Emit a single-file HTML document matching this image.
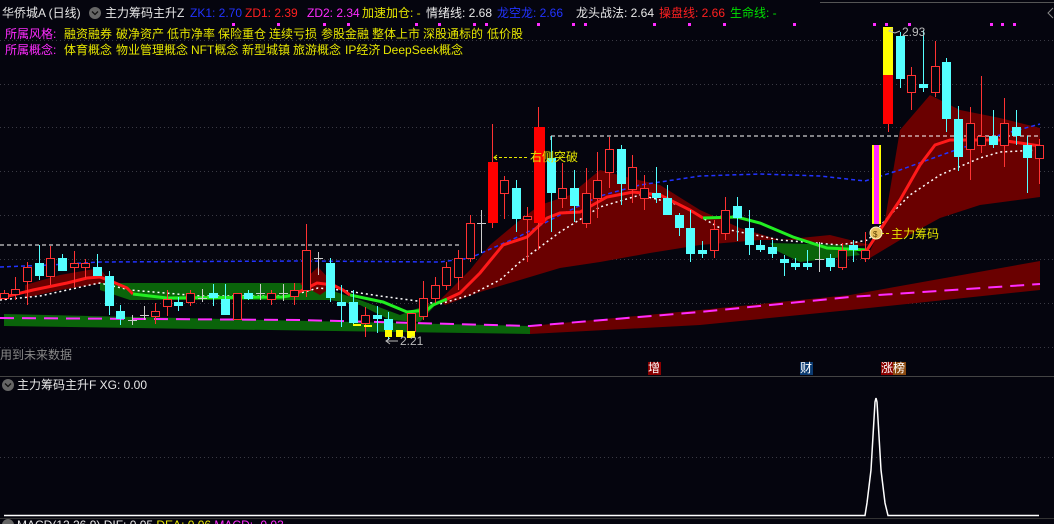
<!DOCTYPE html>
<html><head><meta charset="utf-8"><style>
html,body{margin:0;padding:0;background:#05050e;width:1054px;height:524px;overflow:hidden;position:relative;font-family:"Liberation Sans","Noto Sans CJK SC",sans-serif;font-size:12px}
.t{position:absolute;white-space:nowrap;line-height:14px}
.y{color:#e6e600}.m{color:#ff2cff}.w{color:#e8e8e8}.b{color:#2233ff}.r{color:#ff2020}.g{color:#00e000}
svg{position:absolute;left:0;top:0}
</style></head><body>
<svg width="1054" height="524" viewBox="0 0 1054 524">
<g stroke="#3a3a44" stroke-dasharray="1,3" stroke-width="1">
<line x1="0" y1="40.5" x2="1054" y2="40.5"/><line x1="0" y1="84.5" x2="1054" y2="84.5"/><line x1="0" y1="127.5" x2="1054" y2="127.5"/><line x1="0" y1="171.5" x2="1054" y2="171.5"/><line x1="0" y1="215.5" x2="1054" y2="215.5"/><line x1="0" y1="259.5" x2="1054" y2="259.5"/><line x1="0" y1="303.5" x2="1054" y2="303.5"/><line x1="0" y1="347.5" x2="1054" y2="347.5"/><line x1="0" y1="457.5" x2="1054" y2="457.5"/>
</g>
<line x1="820" y1="2.5" x2="1054" y2="2.5" stroke="#555" />
<!-- bottom band -->
<polygon points="4,314 530,326 530,334 4,326" fill="#0a640a"/>
<polygon points="530,326 700,310 850,295 1040,261 1040,290 850,310 700,325 530,334" fill="#6a0000"/>
<!-- main cloud -->
<polygon points="25,285 60,275 100,268 110,282 60,290 25,298" fill="#6a0000"/>
<polygon points="100,283 300,283 330,290 360,300 400,315 440,300 420,322 390,320 360,305 330,300 290,300 130,300 100,290" fill="#0a640a"/>
<polygon points="300,284 318,267 335,285 320,295" fill="#6a0000"/>
<polygon points="440,300 470,270 490,245 520,220 540,205 570,195 600,170 630,178 660,185 700,210 740,228 780,240 830,235 870,245 850,247 800,240 760,240 700,245 650,253 600,262 560,268 520,280 480,292 445,305" fill="#6a0000"/>
<polygon points="770,243 850,245 860,255 800,262 775,250" fill="#0a640a"/>
<polygon points="868,255 885,220 900,130 930,95 960,110 1000,118 1040,128 1040,197 980,205 940,218 900,240 870,258" fill="#6a0000"/>
<!-- magenta/red lower dashed -->
<polyline points="0,318 300,320 530,326 700,312 850,297 1040,284" fill="none" stroke="#ff2cff" stroke-width="2" stroke-dasharray="14,8"/>
<!-- white dashed horiz -->
<line x1="0" y1="245" x2="460" y2="245" stroke="#fff" stroke-dasharray="4,3"/>
<line x1="551" y1="136" x2="1040" y2="136" stroke="#fff" stroke-dasharray="4,3"/>
<line x1="551" y1="136" x2="551" y2="140" stroke="#fff"/>
<!-- blue dashed -->
<polyline points="0,267 50,265 100,262 300,261 440,262 470,258 520,236 560,215 600,196 640,185 700,176 760,174 820,176 865,181 900,170 950,152 1000,135 1040,124" fill="none" stroke="#2233ff" stroke-dasharray="4,3" stroke-width="1.5"/>
<!-- white dotted MA -->
<polyline points="0,300 40,296 90,285 100,283 130,290 200,296 290,296 318,288 340,290 380,296 440,304 470,295 500,280 520,262 560,232 600,207 640,195 680,205 720,228 780,240 840,245 868,240 890,215 910,195 940,175 980,158 1000,152 1040,150" fill="none" stroke="#fff" stroke-dasharray="2,3" stroke-width="1.5"/>
<!-- red/green MA -->
<polyline points="0,298 33,290 67,283 87,278 100,277 113,282 127,288 133,294" fill="none" stroke="#ff1a1a" stroke-width="3"/>
<polyline points="133,294 167,298 283,297 293,295" fill="none" stroke="#22ee22" stroke-width="3"/>
<polyline points="293,295 317,283 333,285 343,290 350,295" fill="none" stroke="#ff1a1a" stroke-width="3"/>
<polyline points="350,295 383,302 407,312 427,310 433,305 447,299" fill="none" stroke="#22ee22" stroke-width="3"/>
<polyline points="447,299 460,293 480,273 503,245 527,237 547,218 560,213 580,212 607,197 633,192 660,195 690,210 703,218" fill="none" stroke="#ff1a1a" stroke-width="3"/>
<polyline points="703,218 737,217 760,223 793,237 827,248 867,250" fill="none" stroke="#22ee22" stroke-width="3"/>
<polyline points="867,250 880,230 900,200 920,165 935,145 950,140 1000,140 1040,146" fill="none" stroke="#ff1a1a" stroke-width="3"/>
<!-- magenta top squares -->
<g fill="#ff2cff">
<rect x="232" y="23" width="3" height="3"/><rect x="277" y="23" width="3" height="3"/><rect x="323" y="23" width="3" height="3"/><rect x="347" y="23" width="3" height="3"/><rect x="415" y="23" width="3" height="3"/><rect x="438" y="23" width="3" height="3"/><rect x="473" y="23" width="3" height="3"/><rect x="485" y="23" width="3" height="3"/>
<rect x="537" y="23" width="3" height="3"/><rect x="572" y="23" width="3" height="3"/><rect x="584" y="23" width="3" height="3"/><rect x="653" y="23" width="3" height="3"/><rect x="688" y="23" width="3" height="3"/><rect x="723" y="23" width="3" height="3"/><rect x="793" y="23" width="3" height="3"/><rect x="873" y="23" width="3" height="3"/><rect x="885" y="23" width="3" height="3"/><rect x="908" y="23" width="3" height="3"/><rect x="990" y="23" width="3" height="3"/><rect x="1001" y="23" width="3" height="3"/><rect x="1013" y="23" width="3" height="3"/>
</g>
<!-- candles: wicks -->
<g stroke-width="1">
<g stroke="#ff3232">
<line x1="4.5" y1="290" x2="4.5" y2="300"/><line x1="15.5" y1="277" x2="15.5" y2="300"/><line x1="27.5" y1="262" x2="27.5" y2="305"/><line x1="50.5" y1="246" x2="50.5" y2="285"/><line x1="74.5" y1="251" x2="74.5" y2="287"/><line x1="85.5" y1="259" x2="85.5" y2="278"/><line x1="155.5" y1="303" x2="155.5" y2="324"/><line x1="167.5" y1="290" x2="167.5" y2="316"/><line x1="190.5" y1="290" x2="190.5" y2="306"/><line x1="271.5" y1="290" x2="271.5" y2="305"/><line x1="294.5" y1="283" x2="294.5" y2="305"/><line x1="306.5" y1="224" x2="306.5" y2="297"/><line x1="365.5" y1="307" x2="365.5" y2="337"/><line x1="411.5" y1="315" x2="411.5" y2="337"/><line x1="423.5" y1="281" x2="423.5" y2="320"/><line x1="435.5" y1="277" x2="435.5" y2="303"/><line x1="446.5" y1="262" x2="446.5" y2="290"/><line x1="458.5" y1="250" x2="458.5" y2="290"/><line x1="470.5" y1="215" x2="470.5" y2="262"/><line x1="492.5" y1="124" x2="492.5" y2="228"/><line x1="504.5" y1="176" x2="504.5" y2="219"/><line x1="527.5" y1="207" x2="527.5" y2="262"/><line x1="538.5" y1="107" x2="538.5" y2="250"/><line x1="562.5" y1="163" x2="562.5" y2="208"/><line x1="586.5" y1="168" x2="586.5" y2="228"/><line x1="597.5" y1="152" x2="597.5" y2="218"/><line x1="609.5" y1="137" x2="609.5" y2="188"/><line x1="632.5" y1="155" x2="632.5" y2="203"/><line x1="644.5" y1="175" x2="644.5" y2="210"/><line x1="714.5" y1="220" x2="714.5" y2="258"/><line x1="725.5" y1="197" x2="725.5" y2="240"/><line x1="842.5" y1="243" x2="842.5" y2="270"/><line x1="865.5" y1="232" x2="865.5" y2="262"/><line x1="888.5" y1="120" x2="888.5" y2="132"/><line x1="911.5" y1="67" x2="911.5" y2="110"/><line x1="935.5" y1="41" x2="935.5" y2="97"/><line x1="970.5" y1="107" x2="970.5" y2="180"/><line x1="981.5" y1="76" x2="981.5" y2="153"/><line x1="1004.5" y1="98" x2="1004.5" y2="167"/><line x1="1039.5" y1="139" x2="1039.5" y2="184"/>
</g>
<g stroke="#54ffff">
<line x1="39.5" y1="245" x2="39.5" y2="280"/><line x1="62.5" y1="254" x2="62.5" y2="271"/><line x1="97.5" y1="254" x2="97.5" y2="276"/><line x1="109.5" y1="271" x2="109.5" y2="315"/><line x1="120.5" y1="305" x2="120.5" y2="325"/><line x1="178.5" y1="297" x2="178.5" y2="311"/><line x1="213.5" y1="284" x2="213.5" y2="306"/><line x1="225.5" y1="284" x2="225.5" y2="315"/><line x1="248.5" y1="290" x2="248.5" y2="300"/><line x1="330.5" y1="258" x2="330.5" y2="302"/><line x1="341.5" y1="285" x2="341.5" y2="327"/><line x1="353.5" y1="290" x2="353.5" y2="325"/><line x1="377.5" y1="306" x2="377.5" y2="333"/><line x1="388.5" y1="312" x2="388.5" y2="340"/><line x1="516.5" y1="180" x2="516.5" y2="232"/><line x1="551.5" y1="136" x2="551.5" y2="232"/><line x1="574.5" y1="170" x2="574.5" y2="222"/><line x1="621.5" y1="145" x2="621.5" y2="205"/><line x1="656.5" y1="167" x2="656.5" y2="203"/><line x1="667.5" y1="185" x2="667.5" y2="215"/><line x1="679.5" y1="213" x2="679.5" y2="236"/><line x1="690.5" y1="210" x2="690.5" y2="262"/><line x1="702.5" y1="241" x2="702.5" y2="258"/><line x1="737.5" y1="197" x2="737.5" y2="241"/><line x1="749.5" y1="210" x2="749.5" y2="255"/><line x1="760.5" y1="240" x2="760.5" y2="252"/><line x1="772.5" y1="240" x2="772.5" y2="258"/><line x1="784.5" y1="255" x2="784.5" y2="276"/><line x1="795.5" y1="258" x2="795.5" y2="270"/><line x1="807.5" y1="250" x2="807.5" y2="270"/><line x1="830.5" y1="254" x2="830.5" y2="271"/><line x1="853.5" y1="240" x2="853.5" y2="262"/><line x1="900.5" y1="32" x2="900.5" y2="88"/><line x1="923.5" y1="30" x2="923.5" y2="92"/><line x1="946.5" y1="58" x2="946.5" y2="132"/><line x1="958.5" y1="106" x2="958.5" y2="171"/><line x1="993.5" y1="110" x2="993.5" y2="148"/><line x1="1016.5" y1="110" x2="1016.5" y2="145"/><line x1="1027.5" y1="136" x2="1027.5" y2="193"/>
</g>
<g stroke="#cccccc">
<line x1="132.5" y1="315" x2="132.5" y2="325"/><line x1="128" y1="320.5" x2="137" y2="320.5"/>
<line x1="144.5" y1="306" x2="144.5" y2="320"/><line x1="140" y1="315.5" x2="149" y2="315.5"/>
<line x1="202.5" y1="289" x2="202.5" y2="302"/><line x1="198" y1="298.5" x2="207" y2="298.5"/>
<line x1="260.5" y1="284" x2="260.5" y2="300"/><line x1="256" y1="293.5" x2="265" y2="293.5"/>
<line x1="283.5" y1="284" x2="283.5" y2="301"/><line x1="279" y1="293.5" x2="288" y2="293.5"/>
<line x1="318.5" y1="252" x2="318.5" y2="275"/><line x1="314" y1="258.5" x2="323" y2="258.5"/>
<line x1="481.5" y1="210" x2="481.5" y2="253"/><line x1="477" y1="223.5" x2="486" y2="223.5"/>
<line x1="819.5" y1="242" x2="819.5" y2="272"/><line x1="815" y1="259.5" x2="824" y2="259.5"/>
</g>
</g>
<!-- red hollow bodies -->
<g fill="#05050e" stroke="#ff3232">
<rect x="0.5" y="293.5" width="8" height="5"/><rect x="11.5" y="289.5" width="8" height="5"/><rect x="23.5" y="267.5" width="8" height="14"/><rect x="46.5" y="258.5" width="8" height="18"/><rect x="70.5" y="263.5" width="8" height="4"/><rect x="81.5" y="263.5" width="8" height="4"/><rect x="151.5" y="311.5" width="8" height="5"/><rect x="163.5" y="299.5" width="8" height="7"/><rect x="186.5" y="293.5" width="8" height="9"/><rect x="233.5" y="293.5" width="8" height="26"/><rect x="267.5" y="293.5" width="8" height="6"/><rect x="290.5" y="290.5" width="8" height="6"/><rect x="302.5" y="250.5" width="8" height="40"/><rect x="361.5" y="315.5" width="8" height="8"/><rect x="407.5" y="313.5" width="8" height="18"/><rect x="419.5" y="298.5" width="8" height="18"/><rect x="431.5" y="285.5" width="8" height="13"/><rect x="442.5" y="267.5" width="8" height="18"/><rect x="454.5" y="258.5" width="8" height="19"/><rect x="466.5" y="223.5" width="8" height="35"/><rect x="500.5" y="180.5" width="8" height="13"/><rect x="523.5" y="216.5" width="8" height="3"/><rect x="558.5" y="188.5" width="8" height="10"/><rect x="582.5" y="193.5" width="8" height="30"/><rect x="593.5" y="180.5" width="8" height="18"/><rect x="605.5" y="149.5" width="8" height="23"/><rect x="628.5" y="167.5" width="8" height="22"/><rect x="640.5" y="188.5" width="8" height="10"/><rect x="710.5" y="229.5" width="8" height="21"/><rect x="721.5" y="210.5" width="8" height="23"/><rect x="838.5" y="250.5" width="8" height="17"/><rect x="861.5" y="250.5" width="8" height="8"/><rect x="907.5" y="75.5" width="8" height="17"/><rect x="931.5" y="66.5" width="8" height="26"/><rect x="966.5" y="123.5" width="8" height="26"/><rect x="977.5" y="136.5" width="8" height="9"/><rect x="1000.5" y="123.5" width="8" height="22"/><rect x="1035.5" y="145.5" width="8" height="13"/>
</g>
<g fill="#ff0000"><rect x="488" y="162" width="10" height="61"/><rect x="534" y="127" width="11" height="96"/><rect x="883" y="75" width="10" height="49"/></g>
<rect x="883" y="27" width="10" height="48" fill="#ffff00"/>
<rect x="872" y="145" width="9" height="79" fill="#ffff00"/><rect x="874" y="145" width="5" height="79" fill="#ff2cff"/>
<g fill="#ffff00"><rect x="385" y="330" width="7" height="7"/><rect x="396" y="330" width="7" height="7"/><rect x="407" y="331" width="8" height="7"/></g>
<g fill="#ffff00"><rect x="353" y="324" width="8" height="2"/><rect x="364" y="325" width="8" height="2"/></g>
<!-- cyan bodies -->
<g fill="#54ffff">
<rect x="35" y="263" width="9" height="13"/><rect x="58" y="258" width="9" height="13"/><rect x="93" y="267" width="9" height="9"/><rect x="105" y="276" width="9" height="30"/><rect x="116" y="311" width="9" height="8"/><rect x="174" y="302" width="9" height="4"/><rect x="209" y="293" width="9" height="5"/><rect x="221" y="299" width="9" height="16"/><rect x="244" y="293" width="9" height="6"/><rect x="326" y="263" width="9" height="35"/><rect x="337" y="302" width="9" height="4"/><rect x="349" y="302" width="9" height="21"/><rect x="373" y="315" width="9" height="4"/><rect x="384" y="319" width="9" height="11"/><rect x="512" y="188" width="9" height="31"/><rect x="547" y="158" width="9" height="35"/><rect x="570" y="188" width="9" height="18"/><rect x="617" y="149" width="9" height="35"/><rect x="652" y="193" width="9" height="5"/><rect x="663" y="198" width="9" height="17"/><rect x="675" y="215" width="9" height="13"/><rect x="686" y="228" width="9" height="26"/><rect x="698" y="250" width="9" height="4"/><rect x="733" y="206" width="9" height="12"/><rect x="745" y="228" width="9" height="17"/><rect x="756" y="245" width="9" height="5"/><rect x="768" y="247" width="9" height="7"/><rect x="780" y="259" width="9" height="4"/><rect x="791" y="263" width="9" height="4"/><rect x="803" y="263" width="9" height="4"/><rect x="826" y="258" width="9" height="9"/><rect x="849" y="245" width="9" height="5"/><rect x="896" y="36" width="9" height="43"/><rect x="919" y="84" width="9" height="4"/><rect x="942" y="62" width="9" height="57"/><rect x="954" y="119" width="9" height="38"/><rect x="989" y="136" width="9" height="9"/><rect x="1012" y="127" width="9" height="9"/><rect x="1023" y="145" width="9" height="13"/>
</g>
<!-- annotations -->
<line x1="494" y1="157.5" x2="528" y2="157.5" stroke="#e6e600" stroke-dasharray="3,2"/>
<path d="M497 155 L494 157.5 L497 160" stroke="#e6e600" fill="none"/>
<line x1="881" y1="233.5" x2="890" y2="233.5" stroke="#e6e600" stroke-dasharray="3,2"/>
<circle cx="876" cy="233" r="6" fill="#e8c060" stroke="#fff8c0"/>
<text x="873" y="237" font-size="8" fill="#604000" font-family="Liberation Sans">$</text>
<path d="M893 28 L889 31 L895 33 L900 31" stroke="#bbb" fill="none"/>
<path d="M390 338 L386 341 L390 344 M386 341 L398 341" stroke="#bbb" fill="none"/>
<path d="M1053 8 L1048 13 L1053 18" stroke="#888" fill="none"/>
<!-- separators & lower panel -->
<line x1="0" y1="376.5" x2="1054" y2="376.5" stroke="#444"/>
<polyline points="4,515.5 865,515.5 867,503 871,470 875,402 876,398 877,402 881,470 885,503 888,515.5 1039,515.5" fill="none" stroke="#fff" stroke-width="1.5"/>
<line x1="0" y1="518.5" x2="1054" y2="518.5" stroke="#333"/>
<circle cx="95" cy="13" r="6" fill="#666"/><path d="M92 11.5 L95 14.5 L98 11.5" stroke="#111" fill="none" stroke-width="1.3"/>
<circle cx="8" cy="385" r="6" fill="#666"/><path d="M5 383.5 L8 386.5 L11 383.5" stroke="#111" fill="none" stroke-width="1.3"/>
<circle cx="8" cy="525" r="6" fill="#666"/>
</svg>
<div class="t w" style="left:2px;top:6px">华侨城A (日线)</div>
<div class="t w" style="left:105px;top:6px">主力筹码主升Z</div>
<div class="t b" style="left:190px;top:6px">ZK1: 2.70</div>
<div class="t r" style="left:245px;top:6px">ZD1: 2.39</div>
<div class="t m" style="left:307px;top:6px">ZD2: 2.34</div>
<div class="t y" style="left:362px;top:6px">加速加仓: -</div>
<div class="t w" style="left:426px;top:6px">情绪线: 2.68</div>
<div class="t b" style="left:497px;top:6px">龙空龙: 2.66</div>
<div class="t w" style="left:576px;top:6px">龙头战法: 2.64</div>
<div class="t r" style="left:659px;top:6px">操盘线: 2.66</div>
<div class="t g" style="left:730px;top:6px">生命线: -</div>
<div class="t m" style="left:5px;top:27px">所属风格:</div>
<div class="t y" style="left:64px;top:27px">融资融券</div><div class="t y" style="left:116px;top:27px">破净资产</div><div class="t y" style="left:167px;top:27px">低市净率</div><div class="t y" style="left:218px;top:27px">保险重仓</div><div class="t y" style="left:269px;top:27px">连续亏损</div><div class="t y" style="left:321px;top:27px">参股金融</div><div class="t y" style="left:372px;top:27px">整体上市</div><div class="t y" style="left:423px;top:27px">深股通标的</div><div class="t y" style="left:487px;top:27px">低价股</div>
<div class="t m" style="left:5px;top:43px">所属概念:</div>
<div class="t y" style="left:64px;top:43px">体育概念</div><div class="t y" style="left:116px;top:43px">物业管理概念</div><div class="t y" style="left:191px;top:43px">NFT概念</div><div class="t y" style="left:242px;top:43px">新型城镇</div><div class="t y" style="left:293px;top:43px">旅游概念</div><div class="t y" style="left:345px;top:43px">IP经济</div><div class="t y" style="left:383px;top:43px">DeepSeek概念</div>
<div class="t y" style="left:530px;top:150px">右侧突破</div>
<div class="t y" style="left:891px;top:227px">主力筹码</div>
<div class="t" style="left:902px;top:25px;color:#bbb">2.93</div>
<div class="t" style="left:400px;top:334px;color:#bbb">2.21</div>
<div class="t" style="left:0px;top:348px;color:#888">用到未来数据</div>
<div class="t" style="left:648px;top:362px;background:#8b0000;color:#fff;width:13px;height:13px;line-height:13px">增</div>
<div class="t" style="left:800px;top:362px;background:#0a3a70;color:#fff;width:13px;height:13px;line-height:13px">财</div>
<div class="t" style="left:881px;top:362px;background:#8b0000;color:#fff;width:12px;height:13px;line-height:13px">涨</div>
<div class="t" style="left:893px;top:362px;background:#8b4a10;color:#fff;width:13px;height:13px;line-height:13px">榜</div>
<div class="t w" style="left:17px;top:378px">主力筹码主升F XG: 0.00</div>
<div class="t" style="left:17px;top:518px"><span class="w">MACD(12,26,9) DIF: 0.05 </span><span class="y">DEA: 0.06 </span><span class="m">MACD: -0.03</span></div>
</body></html>
